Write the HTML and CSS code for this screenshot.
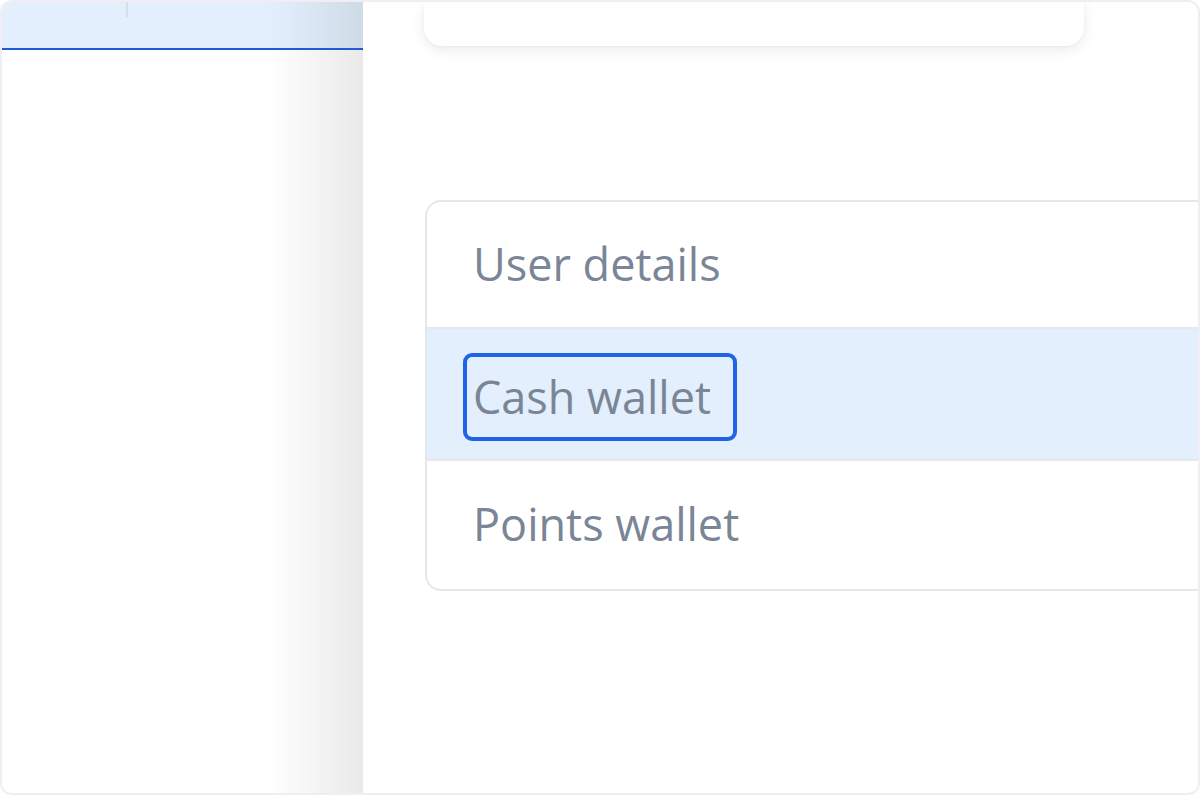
FILE: index.html
```html
<!DOCTYPE html>
<html lang="en">
<head>
<meta charset="utf-8">
<title>Wallets</title>
<link rel="stylesheet" href="styles.css">
</head>
<body>
<div class="frame">
  <aside class="sidebar">
    <div class="sidebar-head">
      <div class="tick"></div>
    </div>
    <div class="sidebar-body"></div>
  </aside>
  <main class="main">
    <div class="top-card"></div>
    <div class="list-card">
      <div class="row row-first"><span class="label">User details</span></div>
      <div class="row row-active"><span class="label label-focus">Cash wallet</span></div>
      <div class="row"><span class="label">Points wallet</span></div>
    </div>
  </main>
</div>
</body>
</html>
```

FILE: styles.css
```css
* { box-sizing: border-box; }

html, body {
  margin: 0;
  padding: 0;
  background: #ffffff;
}

body {
  font-family: "Open Sans", "Liberation Sans", sans-serif;
}

.frame {
  width: 1200px;
  height: 795px;
  border: 2px solid #efeef5;
  border-radius: 12px;
  overflow: hidden;
  display: flex;
  background: #ffffff;
}

.sidebar {
  width: 361px;
  flex: none;
  display: flex;
  flex-direction: column;
  background: linear-gradient(to right, rgba(0,0,0,0) 73%, rgba(0,0,0,0.035) 85%, rgba(0,0,0,0.085) 100%), #ffffff;
}

.sidebar-head {
  height: 48px;
  flex: none;
  padding-left: 124px;
  background: linear-gradient(to right, rgba(0,0,0,0) 73%, rgba(0,0,0,0.035) 85%, rgba(0,0,0,0.085) 100%), #e3effd;
  border-bottom: 2px solid #1f5bd9;
}

.tick {
  width: 2px;
  height: 15px;
  background: #d9dee6;
}

.sidebar-body {
  flex: 1;
}

.main {
  flex: 1;
  min-width: 0;
  padding-left: 61px;
  overflow: hidden;
}

.top-card {
  width: 660px;
  height: 44px;
  background: #ffffff;
  border-radius: 0 0 18px 18px;
  box-shadow: 0 4px 14px rgba(0, 0, 0, 0.08), 0 1px 3px rgba(0, 0, 0, 0.04);
}

.list-card {
  margin-top: 154px;
  margin-left: 1px;
  width: 840px;
  border: 2px solid #e5e7eb;
  border-radius: 16px;
  overflow: hidden;
  background: #ffffff;
}

.row {
  height: 130px;
  display: flex;
  align-items: center;
  padding-left: 36px;
}

.row-first {
  height: 125px;
}

.row + .row {
  border-top: 2px solid #e6e8ec;
}

.row-active {
  height: 132px;
  background: #e3effd;
}

.label {
  display: inline-block;
  line-height: 80px;
  padding: 0 22px 2px 6px;
  border: 4px solid transparent;
  border-radius: 9px;
  font-size: 45px;
  font-weight: 500;
  color: #7a8596;
  white-space: nowrap;
}

.label-focus {
  margin-top: 6px;
  padding-bottom: 0;
  border-color: #1f63e8;
}
```
